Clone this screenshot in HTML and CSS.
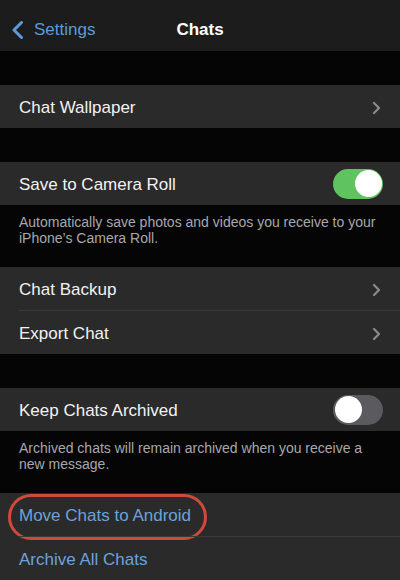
FILE: index.html
```html
<!DOCTYPE html>
<html>
<head>
<meta charset="utf-8">
<link rel="stylesheet" href="styles.css">
</head>
<body>
<div class="screen">
  <header class="nav">
    <div class="back">
      <svg class="back-icon" width="13" height="18" viewBox="0 0 13 18"><path d="M10.5 1.5 L3 9 L10.5 16.5" fill="none" stroke="#5c9ad8" stroke-width="3" stroke-linecap="round" stroke-linejoin="round"/></svg>
      <span>Settings</span>
    </div>
    <div class="title">Chats</div>
  </header>

  <div class="gap"></div>
  <section class="group">
    <div class="row">
      <span class="label">Chat Wallpaper</span>
      <svg class="chev" width="9" height="14" viewBox="0 0 9 14"><path d="M2 2 L7 7 L2 12" fill="none" stroke="#8b8b8f" stroke-width="2.2" stroke-linecap="round" stroke-linejoin="round"/></svg>
    </div>
  </section>

  <div class="gap"></div>
  <section class="group">
    <div class="row">
      <span class="label">Save to Camera Roll</span>
      <span class="toggle on"><span class="knob"></span></span>
    </div>
  </section>
  <p class="note">Automatically save photos and videos you receive to your iPhone’s Camera Roll.</p>

  <section class="group">
    <div class="row sep">
      <span class="label">Chat Backup</span>
      <svg class="chev" width="9" height="14" viewBox="0 0 9 14"><path d="M2 2 L7 7 L2 12" fill="none" stroke="#8b8b8f" stroke-width="2.2" stroke-linecap="round" stroke-linejoin="round"/></svg>
    </div>
    <div class="row">
      <span class="label">Export Chat</span>
      <svg class="chev" width="9" height="14" viewBox="0 0 9 14"><path d="M2 2 L7 7 L2 12" fill="none" stroke="#8b8b8f" stroke-width="2.2" stroke-linecap="round" stroke-linejoin="round"/></svg>
    </div>
  </section>

  <div class="gap"></div>
  <section class="group">
    <div class="row">
      <span class="label">Keep Chats Archived</span>
      <span class="toggle off"><span class="knob"></span></span>
    </div>
  </section>
  <p class="note">Archived chats will remain archived when you receive a new message.</p>

  <section class="group">
    <div class="row sep">
      <span class="label link highlight">Move Chats to Android</span>
    </div>
    <div class="row">
      <span class="label link">Archive All Chats</span>
    </div>
  </section>
</div>
</body>
</html>
```
FILE: styles.css
```css
* { box-sizing: border-box; }
html, body { margin: 0; padding: 0; background: #050505; }
body { width: 400px; height: 580px; overflow: hidden; font-family: "Liberation Sans", Arial, sans-serif; color: #f2f2f2; }
.screen { display: flex; flex-direction: column; }

.nav { height: 51px; background: #1c1c1c; display: flex; align-items: center; position: relative; }
.back { display: flex; align-items: center; gap: 10px; padding-left: 11px; color: #5c9ad8; font-size: 17px; padding-top: 9px; }
.back-icon { display: block; }
.title { position: absolute; left: 0; right: 0; text-align: center; font-weight: bold; font-size: 17px; color: #ffffff; pointer-events: none; top: 20px; }

.gap { height: 34px; }
.group { background: #2a2a2a; }
.row { height: 43px; display: flex; align-items: center; justify-content: space-between; padding: 2px 19px 0 19px; position: relative; }
.row.sep::after { content: ""; position: absolute; left: 19px; right: 0; bottom: 0; height: 1px; background: #3a3a3c; }
.row.sep { height: 44px; }
.label { font-size: 17px; color: #f2f2f2; }
.link { color: #6aa3dc; }
.chev { display: block; margin-right: 0; }

.toggle { width: 50px; height: 30px; border-radius: 15px; position: relative; display: block; margin-right: -2px; margin-top: -2px; }
.toggle.on { background: #5fc35f; }
.toggle.off { background: #5b5b5f; }
.knob { position: absolute; top: 1.5px; width: 27px; height: 27px; border-radius: 50%; background: #ffffff; }
.toggle.on .knob { right: 1.5px; }
.toggle.off .knob { left: 1.5px; }

.note { margin: 0; padding: 9px 12px 9px 19px; font-size: 14px; line-height: 16px; color: #a8a8ac; min-height: 62px; letter-spacing: 0; }

.highlight { position: relative; }
.highlight::before { content: ""; position: absolute; left: -11px; right: -16px; top: -12px; bottom: -14px; border: 3.5px solid #d04a3c; border-radius: 24px; }
```
